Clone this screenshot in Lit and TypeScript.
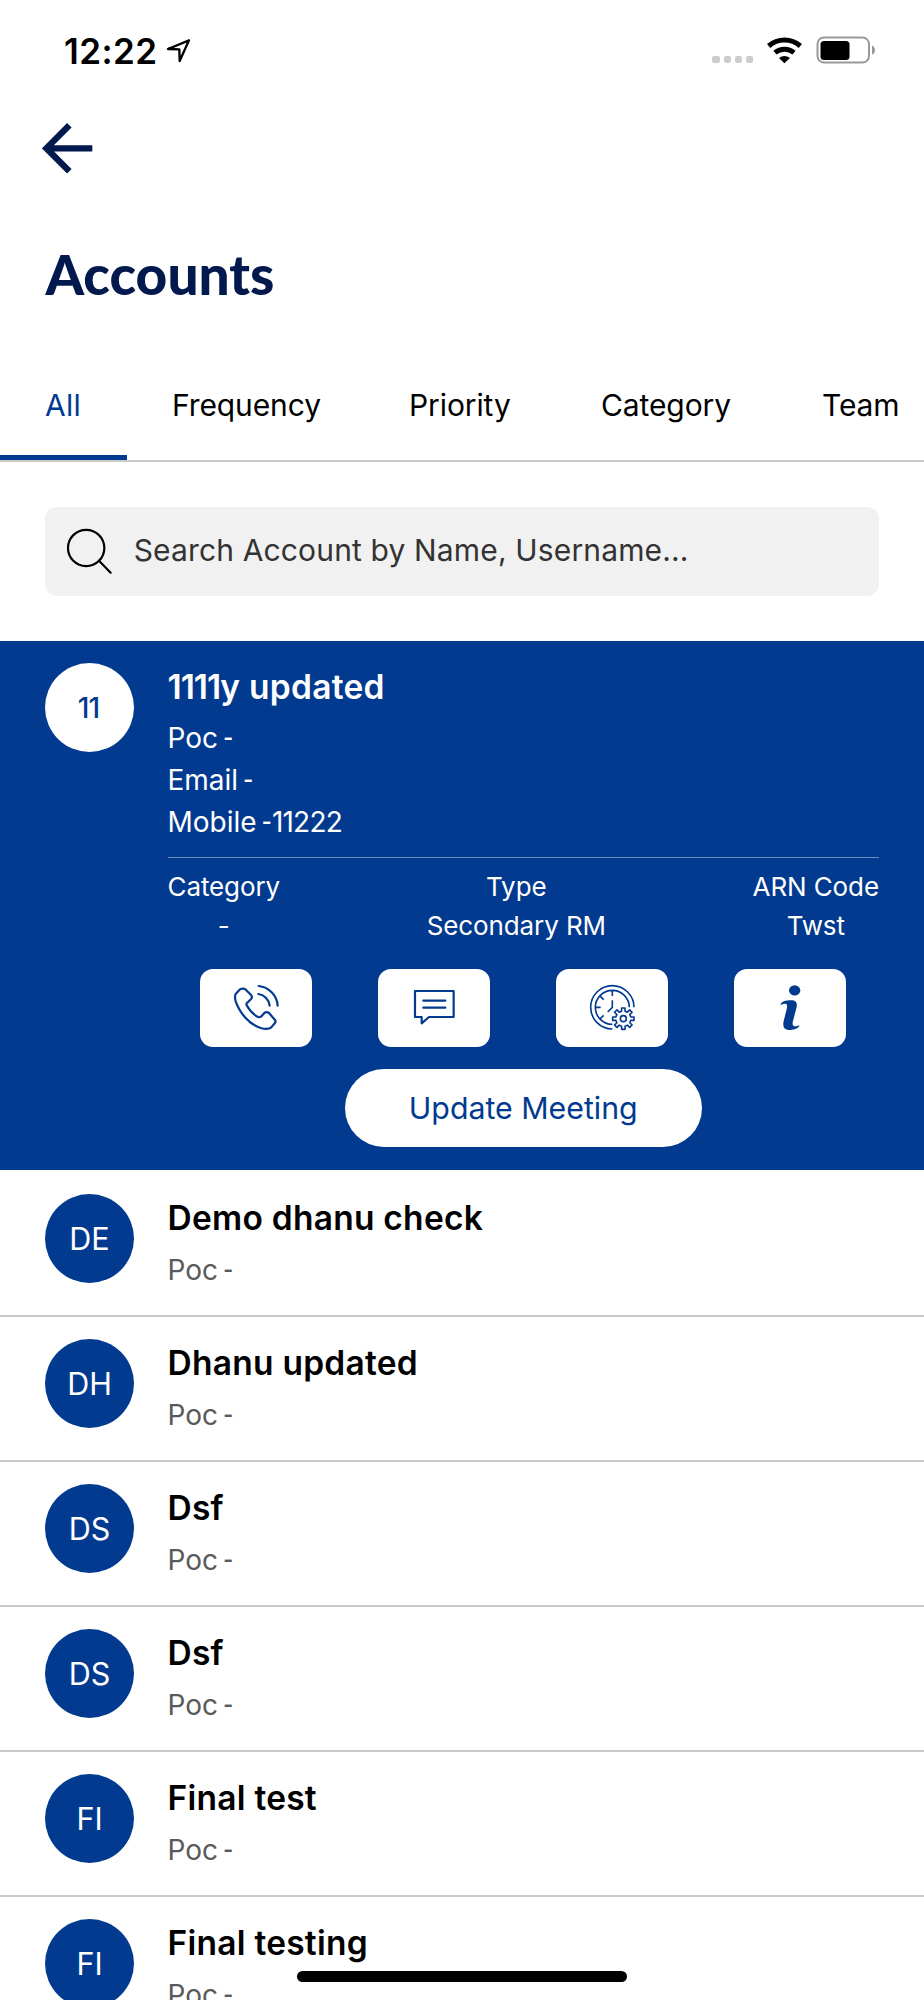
import { LitElement, html, svg, css } from 'lit';
import { customElement, property } from 'lit/decorators.js';

interface Account {
  initials: string;
  name: string;
}

const ACCOUNTS: Account[] = [
  { initials: 'DE', name: 'Demo dhanu check' },
  { initials: 'DH', name: 'Dhanu updated' },
  { initials: 'DS', name: 'Dsf' },
  { initials: 'DS', name: 'Dsf' },
  { initials: 'FI', name: 'Final test' },
  { initials: 'FI', name: 'Final testing' },
];

const TABS = ['All', 'Frequency', 'Priority', 'Category', 'Team'];

// Outline of an eight-toothed gear centred on (cx, cy).
function gear(cx: number, cy: number, inner: number, outer: number): string {
  const points: string[] = [];
  const add = (r: number, deg: number) => {
    const a = (deg * Math.PI) / 180;
    points.push(`${(cx + r * Math.cos(a)).toFixed(1)} ${(cy + r * Math.sin(a)).toFixed(1)}`);
  };
  for (let i = 0; i < 8; i++) {
    const mid = i * 45;
    add(inner, mid - 13);
    add(outer, mid - 9);
    add(outer, mid + 9);
    add(inner, mid + 13);
  }
  return `M${points.join('L')}Z`;
}

const ICONS: Record<string, { box: string; body: unknown }> = {
  phone: {
    box: '130 104 140 140',
    body: svg`<path d="M158 118q-6 0-9 4L138 134q-4 8 0 22C150 190 177 224 213 236q21 6 31-1L256 221q3-5 0-9L238 191q-7-5-14 0L214 202q-4 3-9 1C190 195 180 185 171 168q-2-5 2-8L185 148q4-5 0-10L167 120q-4-3-9-2z"/>
      <path d="M207 110C237 113 262 138 264 169M206 134C223 136 238 151 240 169"/>`,
  },
  chat: {
    box: '664 104 140 140',
    body: svg`<path d="M676 125H792V203H718L696 222V203H676ZM701 154H767M701 175H767"/>`,
  },
  schedule: {
    box: '207 104 140 140',
    body: svg`<g class="thin"><path d="M342 174A65 65 0 1 0 277 239M328 174A51 51 0 1 0 277 225M277 124V140M228 174H242M241 141L251 151M241 208L251 198M277 153V174L263 188"/>
      <path d=${gear(310, 208, 23, 32.5)}/><circle cx="310" cy="208" r="9"/></g>`,
  },
  info: {
    box: '740 104 140 140',
    body: svg`<g class="solid"><ellipse cx="823" cy="123" rx="17" ry="15.5"/>
      <path d="M781 167C781 157 797 153 812 153C828 153 831 161 829 173L818 215C815 226 818 231 824 231C829 231 833 229 837 228C837 236 822 242 810 242C793 242 786 235 790 215L799 180C802 166 800 163 793 163C788 163 784 166 781 167Z"/></g>`,
  },
};

@customElement('action-tile')
export class ActionTile extends LitElement {
  @property() icon = 'phone';

  static styles = css`
    :host {
      display: flex;
      align-items: center;
      justify-content: center;
      width: 112px;
      height: 78px;
      border-radius: 13px;
      background: #fff;
    }
    svg {
      width: 46.67px;
      height: 46.67px;
      fill: none;
      stroke: #023a8f;
      stroke-width: 6.6;
      stroke-linecap: round;
      stroke-linejoin: round;
    }
    .thin {
      stroke-width: 4.8;
      stroke-linecap: butt;
    }
    .solid {
      fill: #023a8f;
      stroke: none;
    }
  `;

  render() {
    const { box, body } = ICONS[this.icon];
    return html`<svg viewBox=${box}>${body}</svg>`;
  }
}

@customElement('account-row')
export class AccountRow extends LitElement {
  @property({ attribute: false }) account!: Account;

  static styles = css`
    :host {
      display: flex;
      box-sizing: border-box;
      height: 145px;
      padding: 22px 45px 0;
      border-top: 2px solid #c9c9c9;
      gap: 33.5px;
    }
    :host([first]) {
      border-top-color: #fff;
    }
    .avatar {
      width: 89px;
      height: 89px;
      border-radius: 50%;
      background: #023a8f;
      color: #fff;
      font-size: 30.5px;
      line-height: 89px;
      text-align: center;
    }
    .name {
      font-size: 33.5px;
      font-weight: 600;
      line-height: 44px;
      letter-spacing: 0.25px;
      margin-top: 2px;
      color: #000;
    }
    .poc {
      font-size: 28px;
      font-weight: 400;
      line-height: 42px;
      margin-top: 9.5px;
      color: #5a5a5a;
    }
    .dash {
      font-family: Lato, sans-serif;
      font-weight: 500;
      margin-left: -3px;
      line-height: 1;
    }
  `;

  render() {
    return html`
      <div class="avatar">${this.account.initials}</div>
      <div>
        <div class="name">${this.account.name}</div>
        <div class="poc">Poc <span class="dash">-</span></div>
      </div>
    `;
  }
}

@customElement('app-root')
export class AppRoot extends LitElement {
  static styles = css`
    :host {
      display: block;
      position: relative;
      height: 2000px;
      overflow: hidden;
      background: #fff;
      font-family: Inter, sans-serif;
      color: #000;
    }
    .status {
      display: flex;
      justify-content: space-between;
      align-items: flex-start;
      height: 122.67px;
      box-sizing: border-box;
      padding: 31px 48px 0 64px;
    }
    .clock {
      display: flex;
      align-items: center;
      gap: 8.5px;
      height: 40px;
      font: 600 35px/40px Inter, sans-serif;
      letter-spacing: 0.4px;
    }
    .clock svg {
      width: 26px;
      height: 26px;
      fill: none;
      stroke: #000;
      stroke-width: 7;
      stroke-linejoin: round;
    }
    .signals {
      display: flex;
      align-items: flex-start;
      padding-top: 5px;
    }
    .dots {
      display: flex;
      gap: 3.7px;
      margin-top: 20px;
    }
    .dots i {
      width: 7.4px;
      height: 7.4px;
      border-radius: 2.2px;
      background: #ccc;
    }
    .wifi {
      width: 37.33px;
      height: 28px;
      margin: 0 0 0 12.6px;
    }
    .battery {
      width: 60px;
      height: 28px;
      margin-left: 13px;
    }
    .back {
      display: block;
      width: 50.67px;
      height: 50.67px;
      margin-left: 42px;
      fill: none;
      stroke: #02194d;
      stroke-width: 19;
    }
    h1 {
      margin: 68px 0 0 45.5px;
      font-family: Lato, sans-serif;
      font-size: 55px;
      font-weight: 900;
      line-height: 66px;
      color: #02194d;
    }
    .tabs {
      display: grid;
      grid-template-columns: 127px 237px 192px 221px 147px;
      margin-top: 52.5px;
      height: 102px;
      box-sizing: border-box;
      border-bottom: 2px solid #c9c9c9;
    }
    .tab {
      box-sizing: border-box;
      padding: 25px 0 0 45px;
      font-size: 30px;
      font-weight: 400;
      line-height: 40px;
      letter-spacing: -0.1px;
      white-space: nowrap;
    }
    .tab.active {
      color: #023a8f;
      border-bottom: 5px solid #023a8f;
      letter-spacing: 0.3px;
    }
    .search {
      display: flex;
      align-items: center;
      gap: 21px;
      height: 89px;
      margin: 45px 45px;
      padding-left: 21px;
      border-radius: 12px;
      background: #f1f1f1;
      font: 400 30px/36px Inter, sans-serif;
      letter-spacing: 0.15px;
      color: #333;
    }
    .search svg {
      width: 46.67px;
      height: 46.67px;
      fill: none;
      stroke: #000;
      stroke-width: 6.6;
      stroke-linecap: round;
    }
    .query {
      padding-bottom: 3px;
    }
    .card {
      display: flex;
      gap: 33.5px;
      box-sizing: border-box;
      height: 529px;
      padding: 22px 45px 0;
      background: #023a8f;
      color: #fff;
    }
    .avatar {
      flex: none;
      box-sizing: border-box;
      width: 89px;
      height: 89px;
      padding-right: 2px;
      border-radius: 50%;
      background: #fff;
      color: #023a8f;
      font: 500 28px/90px Inter, sans-serif;
      letter-spacing: -0.8px;
      text-align: center;
    }
    .details {
      flex: 1;
    }
    .name {
      font-size: 33.5px;
      font-weight: 600;
      line-height: 44px;
      letter-spacing: 0.3px;
      margin-top: 2.5px;
    }
    .name .digits {
      letter-spacing: -1px;
    }
    .lines {
      margin-top: 8.8px;
      font-size: 28px;
      font-weight: 400;
      line-height: 41.8px;
    }
    .lines > div {
      height: 41.8px;
    }
    .dash {
      font-family: Lato, sans-serif;
      font-weight: 500;
      margin-left: -3px;
      line-height: 1;
    }
    .lines .digits {
      letter-spacing: -0.8px;
    }
    .stats {
      display: flex;
      justify-content: space-between;
      margin-top: 13.3px;
      padding-top: 8.9px;
      border-top: 1px solid #6f8dc0;
      font-size: 26px;
      font-weight: 400;
      line-height: 39px;
      letter-spacing: -0.1px;
      text-align: center;
    }
    .actions {
      display: flex;
      justify-content: space-around;
      margin-top: 24px;
    }
    .update {
      width: 357px;
      height: 78px;
      margin: 22.5px auto 0;
      border-radius: 40px;
      background: #fff;
      color: #023a8f;
      font-size: 30.3px;
      font-weight: 400;
      line-height: 78px;
      text-align: center;
    }
    .home {
      position: absolute;
      left: 297px;
      bottom: 18px;
      width: 330px;
      height: 11px;
      border-radius: 6px;
      background: #000;
    }
  `;

  render() {
    return html`
      <div class="status">
        <div class="clock">
          <span>12:22</span>
          <svg viewBox="498 114 78 78"><path d="M567 121L504 147L538 148L539 183Z" /></svg>
        </div>
        <div class="signals">
          <div class="dots"><i></i><i></i><i></i><i></i></div>
          <svg class="wifi" viewBox="914 108 112 84">
            <g fill="none" stroke="#000" stroke-width="15">
              <path d="M922 138A72 72 0 0 1 1017 138M941 158A45 45 0 0 1 998 158" />
            </g>
            <path d="M953 174Q969 162 986 174L969 190Z" />
          </svg>
          <svg class="battery" viewBox="0 0 60 28">
            <rect x="1.5" y="1.5" width="51.5" height="25" rx="6.5" fill="none" stroke="#999" stroke-width="2" />
            <rect x="4.5" y="5" width="29" height="19" rx="3.5" />
            <path d="M56 9.500Q59 11 59 14.200T56 18.800Z" fill="#999" />
          </svg>
        </div>
      </div>
      <svg class="back" viewBox="126 368 152 152"><path d="M208 375L139 444L208 513M139 444H277" /></svg>
      <h1>Accounts</h1>
      <div class="tabs">
        ${TABS.map((t, i) => html`<div class="tab ${i === 0 ? 'active' : ''}">${t}</div>`)}
      </div>
      <div class="search">
        <svg viewBox="198 504 140 140"><circle cx="258.500" cy="564" r="54.500" /><path d="M297 602L332 638" /></svg>
        <span class="query">Search Account by Name, Username...</span>
      </div>
      <div class="card">
        <div class="avatar">11</div>
        <div class="details">
          <div class="name"><span class="digits">1111</span>y updated</div>
          <div class="lines">
            <div>Poc <span class="dash">-</span></div>
            <div>Email <span class="dash">-</span></div>
            <div>Mobile <span class="dash">-</span><span class="digits">11222</span></div>
          </div>
          <div class="stats">
            <div><div>Category</div><div>-</div></div>
            <div><div>Type</div><div>Secondary RM</div></div>
            <div><div>ARN Code</div><div>Twst</div></div>
          </div>
          <div class="actions">
            ${Object.keys(ICONS).map((k) => html`<action-tile icon=${k}></action-tile>`)}
          </div>
          <div class="update">Update Meeting</div>
        </div>
      </div>
      ${ACCOUNTS.map((a, i) => html`<account-row ?first=${i === 0} .account=${a}></account-row>`)}
      <div class="home"></div>
    `;
  }
}
